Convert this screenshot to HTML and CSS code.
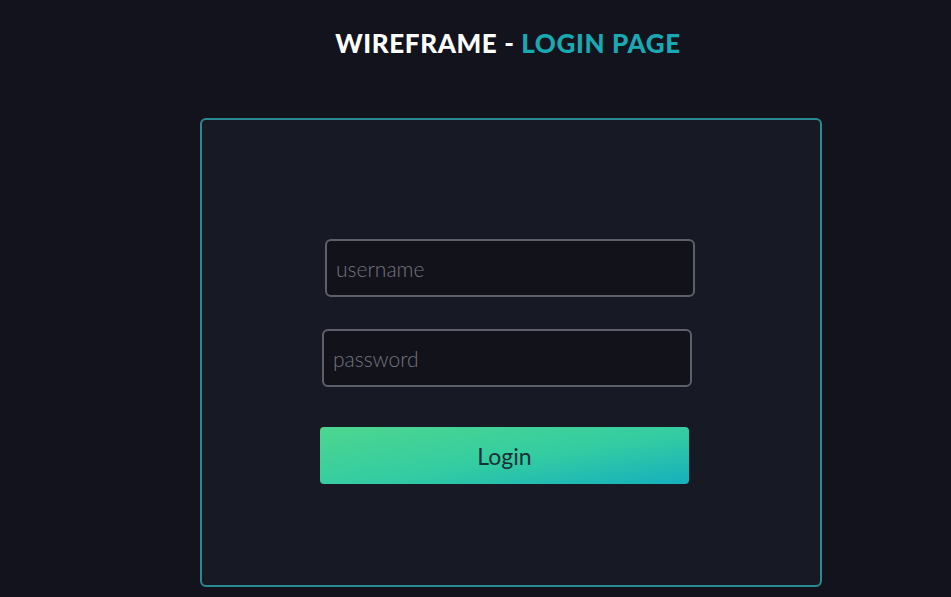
FILE: index.html
```html
<!DOCTYPE html>
<html>
<head>
<meta charset="utf-8">
<link rel="stylesheet" href="styles.css">
</head>
<body>
<div class="page">
  <h1 class="title">WIREFRAME - <span class="accent">LOGIN PAGE</span></h1>
  <div class="card">
    <div class="field field-user">username</div>
    <div class="field field-pass">password</div>
    <div class="btn">Login</div>
  </div>
</div>
</body>
</html>
```
FILE: styles.css
```css
html, body {
  margin: 0;
  padding: 0;
  background: #13131d;
  height: 100%;
  overflow: hidden;
}
.page {
  width: 951px;
  display: flex;
  flex-direction: column;
}
.title {
  margin: 27px 0 0 0;
  height: 32px;
  line-height: 32px;
  font-family: Lato, "Liberation Sans", sans-serif;
  font-weight: 900;
  font-size: 26px;
  letter-spacing: 0.6px;
  color: #ffffff;
  text-align: center;
  padding-left: 65px;
}
.accent {
  color: #19a9b3;
}
.card {
  box-sizing: border-box;
  margin: 59px 0 0 200px;
  width: 622px;
  height: 469px;
  border: 2px solid #2a8a94;
  border-radius: 6px;
  background: #171a25;
  display: flex;
  flex-direction: column;
  align-items: flex-start;
  padding-top: 119px;
}
.field {
  box-sizing: border-box;
  width: 370px;
  height: 58px;
  border: 2px solid #5f5f69;
  border-radius: 6px;
  background: #12121b;
  color: #74747c;
  font-family: Lato, "Noto Sans", sans-serif;
  font-weight: 300;
  font-size: 21px;
  display: flex;
  align-items: center;
  padding-left: 9px;
}
.field-user {
  margin-left: 123px;
}
.field-pass {
  margin-left: 120px;
  margin-top: 32px;
}
.btn {
  margin-left: 118px;
  margin-top: 40px;
  width: 369px;
  height: 57px;
  border-radius: 4px;
  background: linear-gradient(to bottom right, #4dd68f 0%, #33cca2 55%, #16afbd 100%);
  color: #173038;
  font-family: Lato, "Noto Sans", sans-serif;
  font-weight: 400;
  font-size: 23px;
  display: flex;
  align-items: center;
  justify-content: center;
}
```
